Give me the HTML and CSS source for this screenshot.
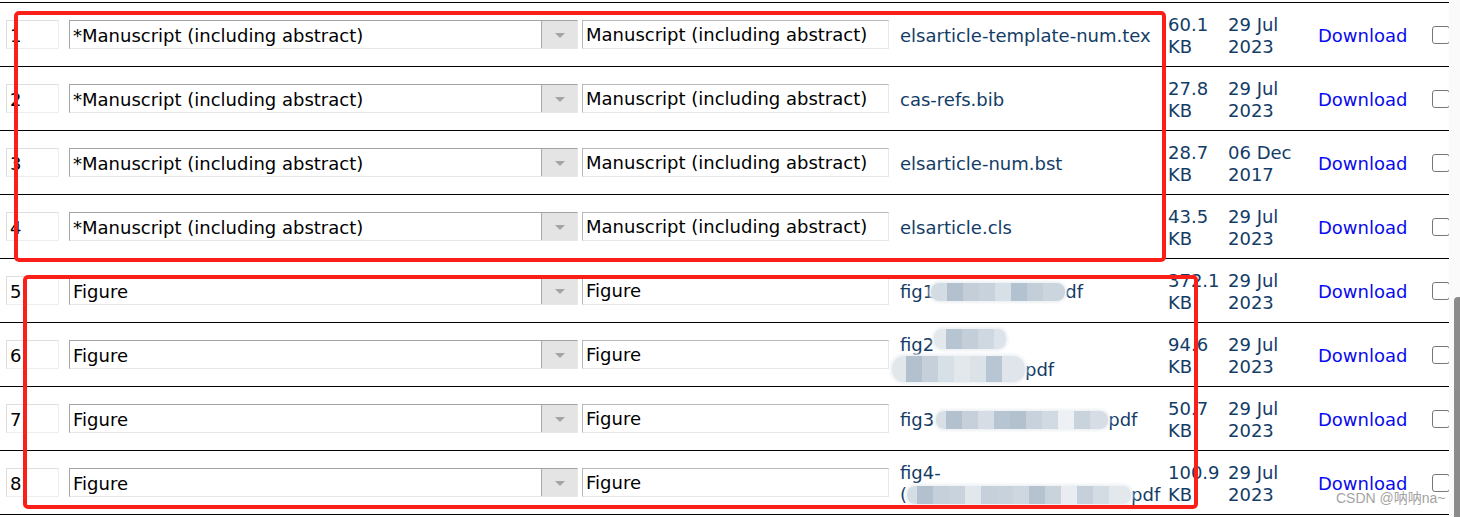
FILE: index.html
```html
<!DOCTYPE html>
<html>
<head>
<meta charset="utf-8">
<link rel="stylesheet" href="styles.css">
</head>
<body>
<div class="page">
  <div class="viewport">
    <div class="grid">
      <div class="row first">
        <div class="c-num"><span class="numbox">1</span></div>
        <div class="c-sel"><span class="select"><span class="sel-text">*Manuscript (including abstract)</span><span class="sel-btn"><span class="tri"></span></span></span></div>
        <div class="c-desc"><span class="textbox">Manuscript (including abstract)</span></div>
        <div class="c-file">elsarticle-template-num.tex</div>
        <div class="c-size">60.1 KB</div>
        <div class="c-date">29 Jul 2023</div>
        <div class="c-dl"><a class="dl">Download</a></div>
        <div class="c-chk"><span class="chk"></span></div>
      </div>
      <div class="row">
        <div class="c-num"><span class="numbox">2</span></div>
        <div class="c-sel"><span class="select"><span class="sel-text">*Manuscript (including abstract)</span><span class="sel-btn"><span class="tri"></span></span></span></div>
        <div class="c-desc"><span class="textbox">Manuscript (including abstract)</span></div>
        <div class="c-file">cas-refs.bib</div>
        <div class="c-size">27.8 KB</div>
        <div class="c-date">29 Jul 2023</div>
        <div class="c-dl"><a class="dl">Download</a></div>
        <div class="c-chk"><span class="chk"></span></div>
      </div>
      <div class="row">
        <div class="c-num"><span class="numbox">3</span></div>
        <div class="c-sel"><span class="select"><span class="sel-text">*Manuscript (including abstract)</span><span class="sel-btn"><span class="tri"></span></span></span></div>
        <div class="c-desc"><span class="textbox">Manuscript (including abstract)</span></div>
        <div class="c-file">elsarticle-num.bst</div>
        <div class="c-size">28.7 KB</div>
        <div class="c-date">06 Dec 2017</div>
        <div class="c-dl"><a class="dl">Download</a></div>
        <div class="c-chk"><span class="chk"></span></div>
      </div>
      <div class="row">
        <div class="c-num"><span class="numbox">4</span></div>
        <div class="c-sel"><span class="select"><span class="sel-text">*Manuscript (including abstract)</span><span class="sel-btn"><span class="tri"></span></span></span></div>
        <div class="c-desc"><span class="textbox">Manuscript (including abstract)</span></div>
        <div class="c-file">elsarticle.cls</div>
        <div class="c-size">43.5 KB</div>
        <div class="c-date">29 Jul 2023</div>
        <div class="c-dl"><a class="dl">Download</a></div>
        <div class="c-chk"><span class="chk"></span></div>
      </div>
      <div class="row">
        <div class="c-num"><span class="numbox">5</span></div>
        <div class="c-sel"><span class="select"><span class="sel-text">Figure</span><span class="sel-btn"><span class="tri"></span></span></span></div>
        <div class="c-desc"><span class="textbox">Figure</span></div>
        <div class="c-file">fig1<span class="mz m1"></span>df</div>
        <div class="c-size">372.1 KB</div>
        <div class="c-date">29 Jul 2023</div>
        <div class="c-dl"><a class="dl">Download</a></div>
        <div class="c-chk"><span class="chk"></span></div>
      </div>
      <div class="row">
        <div class="c-num"><span class="numbox">6</span></div>
        <div class="c-sel"><span class="select"><span class="sel-text">Figure</span><span class="sel-btn"><span class="tri"></span></span></span></div>
        <div class="c-desc"><span class="textbox">Figure</span></div>
        <div class="c-file">fig2<span class="mz m2"></span><br><span class="mz m3"></span>pdf</div>
        <div class="c-size">94.6 KB</div>
        <div class="c-date">29 Jul 2023</div>
        <div class="c-dl"><a class="dl">Download</a></div>
        <div class="c-chk"><span class="chk"></span></div>
      </div>
      <div class="row">
        <div class="c-num"><span class="numbox">7</span></div>
        <div class="c-sel"><span class="select"><span class="sel-text">Figure</span><span class="sel-btn"><span class="tri"></span></span></span></div>
        <div class="c-desc"><span class="textbox">Figure</span></div>
        <div class="c-file">fig3<span class="mz m4"></span>pdf</div>
        <div class="c-size">50.7 KB</div>
        <div class="c-date">29 Jul 2023</div>
        <div class="c-dl"><a class="dl">Download</a></div>
        <div class="c-chk"><span class="chk"></span></div>
      </div>
      <div class="row">
        <div class="c-num"><span class="numbox">8</span></div>
        <div class="c-sel"><span class="select"><span class="sel-text">Figure</span><span class="sel-btn"><span class="tri"></span></span></span></div>
        <div class="c-desc"><span class="textbox">Figure</span></div>
        <div class="c-file">fig4-<br>(<span class="mz m5"></span>pdf</div>
        <div class="c-size">100.9 KB</div>
        <div class="c-date">29 Jul 2023</div>
        <div class="c-dl"><a class="dl">Download</a></div>
        <div class="c-chk"><span class="chk"></span></div>
      </div>
    </div>
  </div>
  <div class="scrollbar"><div class="thumb"></div></div>

  <div class="mark mark-1"></div>
  <div class="mark mark-2"></div>
  <div class="watermark">CSDN @呐呐na~</div>
</div>
</body>
</html>
```

FILE: styles.css
```css
html, body {
  margin: 0;
  padding: 0;
  background: #ffffff;
  overflow: hidden;
}

.page {
  position: relative;
  display: flex;
  width: 1460px;
  height: 517px;
  font-family: "DejaVu Sans", Verdana, sans-serif;
  font-size: 18px;
  line-height: 22px;
}

.viewport {
  width: 1449px;
  height: 517px;
  overflow: hidden;
  padding-top: 2px;
  box-sizing: border-box;
}

.grid {
  width: 1480px;
}

.row {
  display: grid;
  grid-template-columns: 63px 517px 320px 268px 60px 90px 114px 48px;
  align-items: center;
  height: 63px;
  border-bottom: 1px solid #000;
}

.row.first {
  border-top: 1px solid #000;
}

.numbox,
.select,
.textbox {
  display: flex;
  align-items: center;
  height: 29px;
  box-sizing: border-box;
  color: #000;
  white-space: nowrap;
  overflow: hidden;
}

.numbox {
  margin-left: 6px;
  width: 53px;
  padding-left: 3px;
  padding-top: 2px;
  border: 1px solid #dedede;
  border-right-color: #eeeeee;
  border-bottom-color: #eeeeee;
}

.select {
  margin-left: 6px;
  width: 509px;
  border: 1px solid #a3a3a3;
  border-right-color: #e6e6e6;
  border-bottom-color: #e6e6e6;
  background: #fff;
}

.sel-text {
  flex: 1;
  padding-left: 3px;
  padding-top: 2px;
}

.sel-btn {
  width: 35px;
  align-self: stretch;
  display: flex;
  align-items: center;
  justify-content: center;
  background: #e4e4e4;
  border-left: 1px solid #a9a9a9;
}

.tri {
  width: 0;
  height: 0;
  border-left: 5px solid transparent;
  border-right: 5px solid transparent;
  border-top: 5px solid #a4a4a4;
  margin-top: 2px;
}

.textbox {
  margin-left: 2px;
  width: 307px;
  padding-left: 3px;
  padding-top: 1px;
  border: 1px solid #b9b9b9;
  border-right-color: #e8e8e8;
  border-bottom-color: #e8e8e8;
}

.c-file,
.c-size,
.c-date,
.c-dl {
  padding-top: 2px;
}

.c-file,
.c-size,
.c-date {
  color: #133c66;
}

.c-file {
  white-space: nowrap;
}

.dl {
  color: #0a0aee;
  text-decoration: none;
}

.chk {
  display: block;
  width: 18px;
  height: 18px;
  box-sizing: border-box;
  border: 1px solid #777;
  border-radius: 3px;
  background: #fff;
  margin-top: 1px;
}

/* blurred (mosaic) parts of filenames */
.mz {
  display: inline-block;
  vertical-align: -3px;
  height: 18px;
  border-radius: 8px;
  box-shadow: 0 0 3px 2px #eef1f4;
  filter: blur(0.6px);
}

.m1 {
  width: 134px;
  margin-left: -3px;
  background: linear-gradient(90deg,
    #d3dbe3 0 16px, #b3c1cf 16px 32px, #c3ced9 32px 48px, #c8d2dc 48px 64px,
    #d8e0e7 64px 80px, #b3c2d0 80px 96px, #c3ced9 96px 112px, #cbd5de 112px 134px);
}

.m2 {
  width: 72px;
  height: 20px;
  vertical-align: 2px;
  background: linear-gradient(90deg,
    #e3e8ed 0 12px, #b7c5d2 12px 28px, #c3ced9 28px 44px, #cfd8e1 44px 60px, #dce3ea 60px 72px);
}

.m3 {
  width: 133px;
  height: 26px;
  margin-left: -8px;
  vertical-align: -6px;
  border-radius: 12px;
  background: linear-gradient(90deg,
    #e2e7ec 0 14px, #b3c1cf 14px 30px, #c6d0da 30px 46px, #d8e0e7 46px 62px,
    #e3e8ed 62px 78px, #dbe2e8 78px 94px, #b8c5d2 94px 110px, #dfe5eb 110px 133px);
}

.m4 {
  width: 172px;
  margin-left: 2px;
  background: linear-gradient(90deg,
    #d8dfe6 0 10px, #b3c1cf 10px 26px, #c6d0da 26px 42px, #d6dde5 42px 58px,
    #b7c4d1 58px 74px, #b3c1cf 74px 90px, #c8d2dc 90px 106px, #d1dae2 106px 122px,
    #eef1f4 122px 138px, #c9d3dc 138px 154px, #d6dde5 154px 172px);
}

.m5 {
  width: 224px;
  background: linear-gradient(90deg,
    #d5dde4 0 10px, #b3c1cf 10px 26px, #c6d0da 26px 42px, #c9d3dd 42px 58px,
    #e2e7ec 58px 74px, #c6d0da 74px 90px, #c8d2dc 90px 106px, #ced7e0 106px 122px,
    #b5c3d0 122px 138px, #c9d3dc 138px 154px, #e9edf1 154px 170px, #c6d0da 170px 186px,
    #d3dbe3 186px 202px, #e3e8ed 202px 224px);
}

.scrollbar {
  width: 11px;
  height: 517px;
  background: #fafafa;
  display: flex;
  justify-content: flex-end;
}

.thumb {
  width: 6px;
  margin-top: 297px;
  height: 230px;
  background: #8b8b8b;
  border-radius: 4px 0 0 0;
}

/* red annotation boxes drawn over the screenshot */
.mark {
  position: absolute;
  border: 4px solid #fb1f1a;
  border-radius: 5px;
  box-sizing: border-box;
  pointer-events: none;
}

.mark-1 {
  left: 14px;
  top: 11px;
  width: 1152px;
  height: 251px;
}

.mark-2 {
  left: 23px;
  top: 275px;
  width: 1175px;
  height: 234px;
}

.watermark {
  position: absolute;
  left: 1336px;
  top: 489px;
  font-family: "Liberation Sans", "Noto Sans CJK SC", sans-serif;
  font-size: 14px;
  line-height: 18px;
  color: #a3a3a3;
  white-space: nowrap;
}
```
